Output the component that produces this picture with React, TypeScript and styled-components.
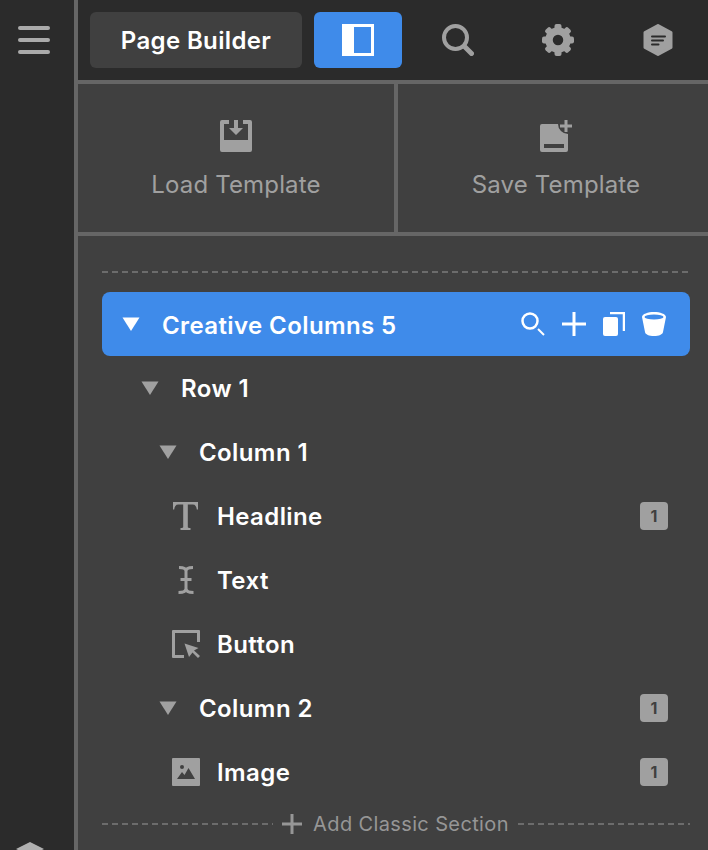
import React from 'react'
import styled, { createGlobalStyle } from 'styled-components'

const Colors = {
  sidebar: '#2b2b2b',
  panel: '#404040',
  line: '#666666',
  blue: '#3f8bea',
  gray: '#a0a0a0',
  white: '#ffffff',
}

function LoadIcon() {
  return (
    <svg width="32" height="32" viewBox="0 0 32 32" fill={Colors.gray}>
      <path d="M0 2a2 2 0 0 1 2-2h7v4H4v16h24V4h-5V0h7a2 2 0 0 1 2 2v28a2 2 0 0 1-2 2H2a2 2 0 0 1-2-2z" />
      <path d="M14 0h4v8h5l-7 7-7-7h5z" />
    </svg>
  )
}

function SaveIcon() {
  return (
    <svg width="32" height="32" viewBox="0 0 32 32" fill={Colors.gray}>
      <path
        fillRule="evenodd"
        d="M2 4h16a10 10 0 0 0 10 10v16a2 2 0 0 1-2 2H2a2 2 0 0 1-2-2V6a2 2 0 0 1 2-2zM4 24v4h20v-4z"
      />
      <path d="M24.500 0h3v4.500H32v3h-4.500V12h-3V7.500H20v-3h4.500z" />
    </svg>
  )
}

function SearchIcon() {
  return (
    <svg width="32" height="32" viewBox="0 0 32 32" fill="none" stroke={Colors.gray}>
      <circle cx="13.500" cy="13.500" r="11.500" strokeWidth="4" />
      <path d="M23 23l6.500 6.500" strokeWidth="5" strokeLinecap="round" />
    </svg>
  )
}

function GearIcon() {
  return (
    <svg width="32" height="32" viewBox="0 0 32 32" fill={Colors.gray}>
      {[0, 45, 90, 135, 180, 225, 270, 315].map((angle) => (
        <rect key={angle} x="12.500" y="0" width="7" height="8" rx="2" transform={`rotate(${angle} 16 16)`} />
      ))}
      <circle cx="16" cy="16" r="9" fill="none" stroke={Colors.gray} strokeWidth="7.500" />
    </svg>
  )
}

function HexIcon() {
  return (
    <svg width="32" height="32" viewBox="0 0 32 32">
      <path d="M16 1.500L29 8.500V23.500L16 30.500L3 23.500V8.500Z" fill={Colors.gray} stroke={Colors.gray} strokeWidth="3" strokeLinejoin="round" />
      <path d="M10 12.500h13M10 16.500h11M10 20.500h6.500" stroke={Colors.sidebar} strokeWidth="2" strokeLinecap="round" />
    </svg>
  )
}

function PanelIcon() {
  return (
    <svg width="32" height="32" viewBox="0 0 32 32">
      <rect x="1.500" y="1.500" width="29" height="29" fill="none" stroke={Colors.white} strokeWidth="3" />
      <rect x="1" y="1" width="11" height="30" fill={Colors.white} />
    </svg>
  )
}

function RowSearchIcon() {
  return (
    <svg width="24" height="24" viewBox="0 0 24 24" fill="none" stroke={Colors.white}>
      <circle cx="9" cy="9" r="7.500" strokeWidth="2.500" />
      <path d="M17 17l6 6" strokeWidth="2" />
    </svg>
  )
}

function PlusIcon({ size, color, weight }: { size: number; color: string; weight: number }) {
  return (
    <svg width={size} height={size} viewBox={`0 0 ${size} ${size}`} stroke={color} strokeWidth={weight}>
      <path d={`M${size / 2} 0V${size}M0 ${size / 2}H${size}`} />
    </svg>
  )
}

function CopyIcon() {
  return (
    <svg width="22" height="24" viewBox="0 0 22 24" fill={Colors.white}>
      <rect x="0" y="5" width="15" height="19" rx="2" />
      <path d="M7 1h14v18" fill="none" stroke={Colors.white} strokeWidth="2.500" />
    </svg>
  )
}

function TrashIcon() {
  return (
    <svg width="24" height="24" viewBox="0 0 24 24" fill={Colors.white}>
      <path d="M0 5C0 2 6 0 12 0s12 2 12 5L21 20c-.4 2.500-4 4-9 4s-8.600-1.500-9-4z" />
      <ellipse cx="12" cy="5" rx="9.500" ry="2.600" fill={Colors.blue} />
    </svg>
  )
}

function HeadlineIcon() {
  return (
    <svg width="28" height="28" viewBox="0 0 28 28" fill={Colors.gray}>
      <path d="M1 0h25v7.500h-1.200c-.3-3-1.500-5-4-5H15.800v22.500c0 .8 .8 1 2.700 1V28H8.500v-2c1.900 0 2.700-.2 2.700-1V2.500H6.200c-2.500 0-3.700 2-4 5H1z" />
    </svg>
  )
}

function TextIcon() {
  return (
    <svg width="28" height="28" viewBox="0 0 28 28" fill="none" stroke={Colors.gray} strokeWidth="3">
      <path d="M7 1.500c3 0 7 .5 7 3.500 0-3 4-3.500 7-3.500M14 5v18M8.500 13.500h11M6.500 26.500c3.500 0 7.500-1 7.500-4 0 3 4 4 7.500 4" />
    </svg>
  )
}

function ButtonIcon() {
  return (
    <svg width="28" height="28" viewBox="0 0 28 28" fill={Colors.gray}>
      <path d="M1 0h26a1 1 0 0 1 1 1v11h-3V3H3v22h9v3H1a1 1 0 0 1-1-1V1a1 1 0 0 1 1-1z" />
      <path d="M12.500 13.500L26.500 18L22 20.500L28 26L26 28L20.500 22.500L17 27Z" />
    </svg>
  )
}

function ImageIcon() {
  return (
    <svg width="28" height="28" viewBox="0 0 28 28">
      <rect width="28" height="28" rx="1" fill={Colors.gray} />
      <circle cx="10" cy="9" r="2" fill={Colors.panel} />
      <path d="M5 21l5-7 2.500 3 4-7L23 21z" fill={Colors.panel} />
    </svg>
  )
}

function Caret({ color }: { color: string }) {
  return (
    <svg width="18" height="14" viewBox="0 0 18 14" fill={color}>
      <path d="M0.500 0.500h17L9 14z" />
    </svg>
  )
}

function Badge() {
  return <BadgeBox>1</BadgeBox>
}

const tree = [
  { label: 'Row 1', indent: 39, caret: true },
  { label: 'Column 1', indent: 57, caret: true },
  { label: 'Headline', indent: 70, icon: <HeadlineIcon />, badge: true },
  { label: 'Text', indent: 70, icon: <TextIcon /> },
  { label: 'Button', indent: 70, icon: <ButtonIcon /> },
  { label: 'Column 2', indent: 57, caret: true, badge: true },
  { label: 'Image', indent: 70, icon: <ImageIcon />, badge: true },
]

export default function App() {
  return (
    <Page>
      <GlobalStyle />
      <Sidebar>
        <MenuButton>
          <span />
          <span />
          <span />
        </MenuButton>
        <SidebarFoot>
          <svg width="28" height="14" viewBox="0 0 28 14" fill="#b0b0b0">
            <path d="M14 0l14 7-14 7L0 7z" />
          </svg>
        </SidebarFoot>
      </Sidebar>
      <Main>
        <TopBar>
          <TitleButton>Page Builder</TitleButton>
          <ActiveButton>
            <PanelIcon />
          </ActiveButton>
          <ToolButton>
            <SearchIcon />
          </ToolButton>
          <ToolButton>
            <GearIcon />
          </ToolButton>
          <ToolButton>
            <HexIcon />
          </ToolButton>
        </TopBar>
        <Templates>
          <TemplateCell>
            <LoadIcon />
            <TemplateLabel>Load Template</TemplateLabel>
          </TemplateCell>
          <TemplateCell>
            <SaveIcon />
            <TemplateLabel>Save Template</TemplateLabel>
          </TemplateCell>
        </Templates>
        <Outline>
          <TopRule />
          <SectionRow>
            <Caret color={Colors.white} />
            <SectionTitle>Creative Columns 5</SectionTitle>
            <SectionActions>
              <RowSearchIcon />
              <PlusIcon size={24} color={Colors.white} weight={3} />
              <CopyIcon />
              <TrashIcon />
            </SectionActions>
          </SectionRow>
          <TreeList>
            {tree.map((item) => (
              <TreeRow key={item.label} $indent={item.indent} $leaf={!item.caret}>
                {item.caret ? <Caret color={Colors.gray} /> : item.icon}
                <TreeLabel>{item.label}</TreeLabel>
                {item.badge && <Badge />}
              </TreeRow>
            ))}
          </TreeList>
          <AddSection>
            <AddRule $width={171} />
            <AddLabel>
              <PlusIcon size={20} color="#969696" weight={3} />
              Add Classic Section
            </AddLabel>
            <AddRule $width={172} />
          </AddSection>
        </Outline>
      </Main>
    </Page>
  )
}

const GlobalStyle = createGlobalStyle`
  html,
  body {
    margin: 0;
    padding: 0;
    background: ${Colors.panel};
    overflow: hidden;
  }
  * {
    box-sizing: border-box;
  }
`

const Page = styled.div`
  display: flex;
  width: 708px;
  height: 850px;
  overflow: hidden;
  font-family: Inter, 'Liberation Sans', sans-serif;
  color: ${Colors.white};
`

const Sidebar = styled.aside`
  display: flex;
  flex-direction: column;
  align-items: center;
  flex: 0 0 78px;
  height: 850px;
  padding: 26px 6px 0 0;
  background: ${Colors.sidebar};
  border-right: 4px solid ${Colors.line};
`

const MenuButton = styled.div`
  display: flex;
  flex-direction: column;
  flex: none;
  gap: 8px;
  width: 32px;

  span {
    height: 4px;
    border-radius: 2px;
    background: #aaaaaa;
  }
`

const SidebarFoot = styled.div`
  display: flex;
  flex: none;
  margin: 788px 9px 0 0;
`

const Main = styled.div`
  display: flex;
  flex-direction: column;
  flex: 1;
  min-width: 0;
`

const TopBar = styled.header`
  display: flex;
  align-items: center;
  flex: none;
  height: 84px;
  padding-left: 12px;
  background: ${Colors.sidebar};
  border-bottom: 4px solid ${Colors.line};
`

const TitleButton = styled.div`
  display: flex;
  align-items: center;
  justify-content: center;
  width: 212px;
  height: 56px;
  margin-right: 12px;
  padding-top: 2px;
  border-radius: 6px;
  background: ${Colors.panel};
  font-size: 24px;
  line-height: 32px;
  font-weight: 600;
  letter-spacing: 0.35px;
`

const ActiveButton = styled.div`
  display: flex;
  align-items: center;
  justify-content: center;
  width: 88px;
  height: 56px;
  margin-right: 6px;
  border-radius: 6px;
  background: ${Colors.blue};
`

const ToolButton = styled.div`
  display: flex;
  align-items: center;
  justify-content: center;
  width: 100px;
  height: 56px;
`

const Templates = styled.section`
  display: grid;
  grid-template-columns: 320px 1fr;
  flex: none;
  height: 152px;
  border-bottom: 4px solid ${Colors.line};
`

const TemplateCell = styled.button`
  display: flex;
  flex-direction: column;
  align-items: center;
  gap: 17px;
  padding: 36px 0 0 6px;
  border: none;
  background: ${Colors.panel};
  font: inherit;

  &:first-child {
    padding-left: 0;
    border-right: 4px solid ${Colors.line};
  }
`

const TemplateLabel = styled.span`
  font-size: 24px;
  line-height: 32px;
  font-weight: 400;
  letter-spacing: 0.15px;
  color: ${Colors.gray};
`

const Outline = styled.section`
  display: flex;
  flex-direction: column;
  flex: 1;
  padding: 35px 18px 0 24px;
  background: ${Colors.panel};
`

const TopRule = styled.div`
  flex: none;
  height: 2px;
  background: repeating-linear-gradient(90deg, #6c6c6c 0 6px, transparent 6px 10px);
`

const AddRule = styled.div<{ $width: number }>`
  flex: none;
  width: ${(p) => p.$width}px;
  height: 2px;
  background: repeating-linear-gradient(90deg, #6c6c6c 0 6px, transparent 6px 10px);
`

const SectionRow = styled.div`
  display: flex;
  align-items: center;
  flex: none;
  gap: 22px;
  height: 64px;
  margin-top: 19px;
  padding: 0 24px 0 20px;
  border-radius: 8px;
  background: ${Colors.blue};
`

const SectionTitle = styled.span`
  padding-top: 4px;
  font-size: 24px;
  line-height: 32px;
  font-weight: 600;
  letter-spacing: 0.4px;
`

const SectionActions = styled.div`
  display: flex;
  align-items: center;
  gap: 17px;
  margin-left: auto;
`

const TreeList = styled.div`
  display: flex;
  flex-direction: column;
  flex: none;
`

const TreeRow = styled.div<{ $indent: number; $leaf: boolean }>`
  display: flex;
  align-items: center;
  gap: ${(p) => (p.$leaf ? 17 : 22)}px;
  height: 64px;
  padding: 0 22px 0 ${(p) => p.$indent}px;
`

const TreeLabel = styled.span`
  padding-top: 2px;
  font-size: 24px;
  line-height: 32px;
  font-weight: 600;
  letter-spacing: 0.4px;
`

const BadgeBox = styled.span`
  display: flex;
  align-items: center;
  justify-content: center;
  width: 28px;
  height: 28px;
  margin-left: auto;
  border-radius: 4px;
  background: ${Colors.gray};
  color: ${Colors.panel};
  font-size: 16px;
  font-weight: 700;
`

const AddSection = styled.div`
  display: flex;
  align-items: center;
  justify-content: space-between;
  flex: none;
  height: 40px;
`

const AddLabel = styled.div`
  display: flex;
  align-items: center;
  gap: 11px;
  font-size: 20px;
  line-height: 28px;
  letter-spacing: 0.37px;
  color: #969696;
`
